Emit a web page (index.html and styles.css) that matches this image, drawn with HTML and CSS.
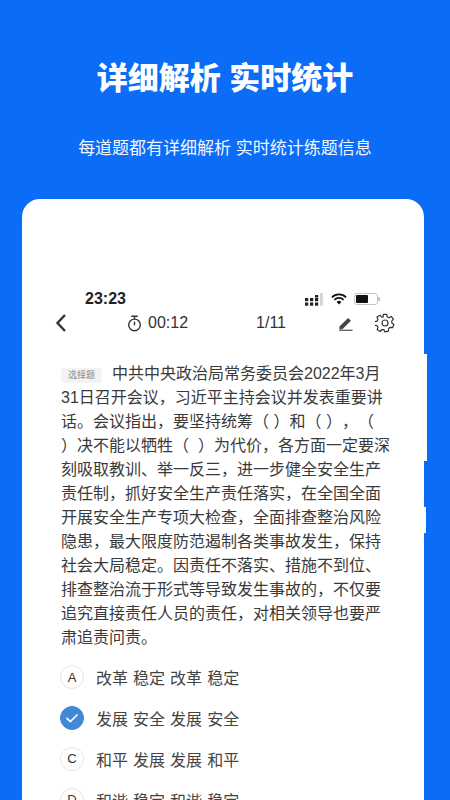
FILE: index.html
```html
<!DOCTYPE html>
<html lang="zh-CN">
<head>
<meta charset="utf-8">
<title>详细解析 实时统计</title>
<link rel="stylesheet" href="styles.css">
</head>
<body>
<main class="screen">
  <h1 class="title">详细解析 实时统计</h1>
  <p class="subtitle">每道题都有详细解析 实时统计练题信息</p>
  <section class="card">
    <span class="nub nub-a"></span>
    <span class="nub nub-b"></span>
    <div class="status">
      <span class="clock">23:23</span>
      <div class="status-icons">
        <svg class="signal" viewBox="0 0 18 13" width="18" height="13" aria-hidden="true">
          <g fill="#222"><rect x="0" y="5" width="3.200" height="3.200"/><rect x="0" y="9.500" width="3.200" height="3.200"/><rect x="5" y="5" width="3.200" height="3.200"/><rect x="5" y="9.500" width="3.200" height="3.200"/><rect x="10" y="2" width="3.200" height="2.500"/><rect x="10" y="5" width="3.200" height="3.200"/><rect x="10" y="9.500" width="3.200" height="3.200"/></g>
          <g fill="#d4d4d4"><rect x="15" y="0" width="2.800" height="12.700"/></g>
        </svg>
        <svg class="wifi" viewBox="0 0 18 13" width="16" height="12" aria-hidden="true">
          <path d="M1 4.600a11.500 11.500 0 0 1 16 0M3.800 7.400a7.500 7.500 0 0 1 10.400 0" fill="none" stroke="#111" stroke-width="2"/>
          <path d="M6.300 9.800a3.800 3.800 0 0 1 5.400 0L9 12.600z" fill="#111"/>
        </svg>
        <span class="battery"><span class="battery-fill"></span></span>
        <span class="battery-cap"></span>
      </div>
    </div>
    <nav class="toolbar">
      <svg class="back" viewBox="0 0 12 20" width="12" height="20" aria-hidden="true"><path d="M10 2 2.500 10 10 18" fill="none" stroke="#333" stroke-width="2.400"/></svg>
      <div class="timer">
        <svg viewBox="0 0 16 18" width="15" height="17" aria-hidden="true"><path d="M4.500 1.200h7M8 1.200v3" fill="none" stroke="#333" stroke-width="1.500"/><circle cx="8" cy="10.500" r="6.200" fill="none" stroke="#333" stroke-width="1.500"/><path d="M8 7v4" fill="none" stroke="#333" stroke-width="1.500"/></svg>
        <span>00:12</span>
      </div>
      <span class="count">1/11</span>
      <svg class="pen" viewBox="0 0 16 16" width="15" height="15" aria-hidden="true"><path d="M1.500 11.200 10.800 2l3 3-9.200 9.200H1.500z" fill="#444"/><path d="M1 15.200h14.500" stroke="#444" stroke-width="1.200"/></svg>
      <svg class="gear" viewBox="0 0 20 20" width="20" height="20" aria-hidden="true"><path d="M8.300 1.300h3.400l.5 2.600 1.700.8 2.300-1.300 2.200 2.800-1.700 2 .2 1.900 2 1.500-1.300 3.100-2.600-.4-1.400 1.300-.2 2.600-3.400.7-1.200-2.300-1.900-.1-1.700 2-3-1.700.8-2.500-1-1.600-2.600-.5v-3.500l2.600-.6.900-1.600-.9-2.500 3-1.800 1.700 2 1.500-.2z" fill="none" stroke="#333" stroke-width="1.200" stroke-linejoin="round"/><circle cx="10" cy="10" r="3" fill="none" stroke="#333" stroke-width="1.200"/></svg>
    </nav>
    <p class="question"><span class="tag">选择题</span>中共中央政治局常务委员会2022年3月<br>31日召开会议，习近平主持会议并发表重要讲<br>话。会议指出，要坚持统筹（ ）和（ ），（<br>）决不能以牺牲（&nbsp;&nbsp;）为代价，各方面一定要深<br>刻吸取教训、举一反三，进一步健全安全生产<br>责任制，抓好安全生产责任落实，在全国全面<br>开展安全生产专项大检查，全面排查整治风险<br>隐患，最大限度防范遏制各类事故发生，保持<br>社会大局稳定。因责任不落实、措施不到位、<br>排查整治流于形式等导致发生事故的，不仅要<br>追究直接责任人员的责任，对相关领导也要严<br>肃追责问责。</p>
    <ul class="options">
      <li class="option"><span class="badge">A</span>改革 稳定 改革 稳定</li>
      <li class="option"><span class="badge badge-on"><svg viewBox="0 0 14 10" width="14" height="10" aria-hidden="true"><path d="M1.500 5 5.300 8.500 12.500 1.500" fill="none" stroke="#fff" stroke-width="1.700"/></svg></span>发展 安全 发展 安全</li>
      <li class="option"><span class="badge">C</span>和平 发展 发展 和平</li>
      <li class="option"><span class="badge">D</span>和谐 稳定 和谐 稳定</li>
    </ul>
  </section>
</main>
</body>
</html>
```
FILE: styles.css
```css
html, body {
  margin: 0;
  height: 100%;
  overflow: hidden;
}
body {
  background: #0a6cf7;
  font-family: "Liberation Sans", "Noto Sans CJK SC", sans-serif;
}
.screen {
  height: 800px;
  overflow: hidden;
  display: flex;
  flex-direction: column;
  align-items: center;
}
.title {
  margin: 57px 0 0;
  height: 44px;
  font-size: 31px;
  line-height: 44px;
  font-weight: 900;
  color: #fff;
  white-space: nowrap;
}
.subtitle {
  margin: 26px 0 0;
  height: 44px;
  font-size: 17px;
  line-height: 44px;
  font-weight: 400;
  color: #f2f7ff;
  white-space: nowrap;
}
.card {
  position: relative;
  margin: 28px 0 0 -4px;
  box-sizing: border-box;
  width: 402px;
  height: 641px;
  padding: 90px 0 0 38px;
  background: #fff;
  border-radius: 18px 18px 0 0;
  color: #333;
}
.nub {
  position: absolute;
  left: 100%;
  background: #fff;
}
.nub-a { top: 155px; width: 3px; height: 107px; }
.nub-b { top: 308px; width: 2px; height: 26px; }
.status {
  display: flex;
  align-items: center;
  height: 20px;
}
.clock {
  width: 42px;
  margin-left: 25px;
  font-size: 16px;
  font-weight: 700;
  color: #222;
  white-space: nowrap;
}
.status-icons {
  display: flex;
  align-items: center;
  margin-left: 178px;
}
.wifi { margin-left: 8px; }
.battery {
  box-sizing: border-box;
  width: 24px;
  height: 12px;
  margin-left: 7px;
  padding: 1px;
  border: 1px solid #c4c4c4;
  border-radius: 3px;
}
.battery-fill {
  display: block;
  width: 12px;
  height: 8px;
  background: #111;
  border-radius: 1px;
}
.battery-cap {
  width: 1.500px;
  height: 4px;
  background: #c4c4c4;
}
.toolbar {
  display: flex;
  align-items: center;
  height: 28px;
  color: #333;
}
.back { margin-left: -5px; }
.timer {
  display: flex;
  align-items: center;
  gap: 6px;
  margin-left: 60px;
  font-size: 16px;
}
.count { margin-left: 68px; font-size: 16px; }
.pen { margin-left: 52px; }
.gear { margin-left: 22px; }
.question {
  margin: 25px 0 0 1px;
  font-size: 16px;
  line-height: 24px;
  color: #3a3a3a;
  white-space: nowrap;
  text-spacing-trim: space-all;
}
.tag {
  display: inline-block;
  width: 41px;
  height: 15px;
  margin-right: 10px;
  background: #f3f3f3;
  border-radius: 3px;
  font-size: 9px;
  line-height: 15px;
  text-align: center;
  color: #888;
  vertical-align: 1px;
}
.options {
  list-style: none;
  margin: 7px 0 0;
  padding: 0;
}
.option {
  display: flex;
  align-items: center;
  gap: 12px;
  height: 40.800px;
  font-size: 16px;
  word-spacing: .6px;
  color: #444;
  white-space: nowrap;
}
.badge {
  box-sizing: border-box;
  display: flex;
  align-items: center;
  justify-content: center;
  width: 24px;
  height: 24px;
  border: 1px solid #e6e6e6;
  border-radius: 50%;
  font-size: 13px;
  color: #333;
}
.badge-on {
  background: #4088d8;
  border-color: #4088d8;
}
```
